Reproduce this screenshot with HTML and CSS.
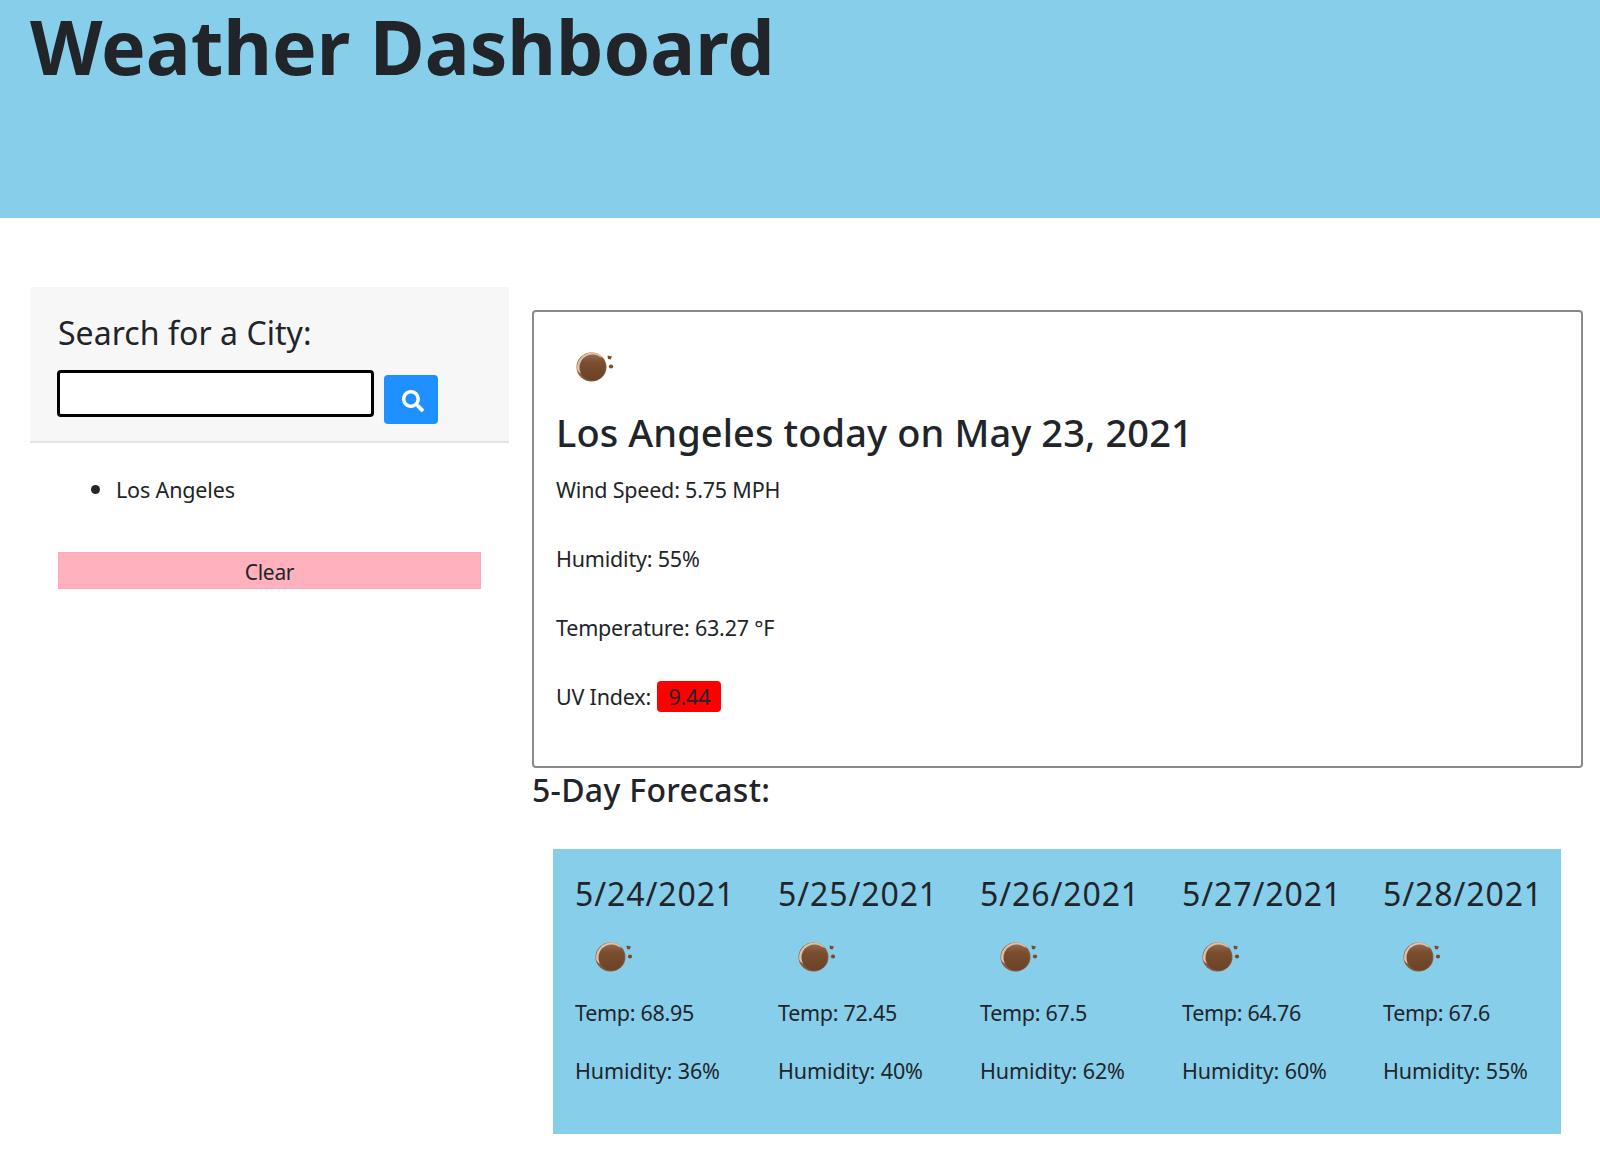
FILE: index.html
```html
<!DOCTYPE html>
<html lang="en">
<head>
<meta charset="utf-8">
<title>Weather Dashboard</title>
<link rel="stylesheet" href="styles.css">
</head>
<body>
<svg class="defs" width="0" height="0" aria-hidden="true">
  <defs>
    <linearGradient id="ball" x1="0" y1="0" x2="0" y2="1">
      <stop offset="0" stop-color="#94674a"/>
      <stop offset="0.3" stop-color="#7a4f30"/>
      <stop offset="1" stop-color="#6b4226"/>
    </linearGradient>
    <symbol id="wx" viewBox="0 0 50 50">
      <ellipse cx="25.500" cy="26" rx="15" ry="14.500" fill="#8a5a3a"/>
      <path d="M11 27C11 18 18 11.500 26 11.500C31 11.500 35 14 37 17C31 14.500 21 14.500 17 19C14.500 22 14 27 16 33C13 32 11 30 11 27Z" fill="#e3bfa8"/>
      <circle cx="26.500" cy="26.500" r="13" fill="url(#ball)"/>
      <path d="M41.500 14.500L46 15.500L44.500 18.500L42 18Z" fill="#7a4a2c"/>
      <circle cx="45" cy="25.500" r="2.100" fill="#7a4a2c"/>
    </symbol>
  </defs>
</svg>
<header class="banner">
  <h1 class="title">Weather Dashboard</h1>
</header>
<div class="layout">
  <aside class="sidebar">
    <div class="search">
      <h2 class="search-title">Search for a City:</h2>
      <form class="search-form">
        <input class="search-input" type="text" aria-label="City">
        <button class="search-btn" type="button" aria-label="Search">
          <svg viewBox="0 0 512 512" width="22" height="22"><path fill="#fff" d="M505 442.700L405.300 343c-4.500-4.500-10.600-7-17-7H372c27.600-35.300 44-79.700 44-128C416 93.100 322.900 0 208 0S0 93.100 0 208s93.100 208 208 208c48.300 0 92.700-16.400 128-44v16.300c0 6.400 2.500 12.500 7 17l99.700 99.700c9.400 9.400 24.600 9.400 33.900 0l28.300-28.300c9.400-9.400 9.400-24.600.1-34zM208 336c-70.700 0-128-57.200-128-128 0-70.700 57.200-128 128-128 70.700 0 128 57.200 128 128 0 70.700-57.200 128-128 128z"/></svg>
        </button>
      </form>
    </div>
    <ul class="history">
      <li>Los Angeles</li>
    </ul>
    <button class="clear" type="button">Clear</button>
  </aside>
  <main class="content">
    <section class="today">
      <svg class="wx-today"><use href="#wx"/></svg>
      <h2 class="today-title">Los Angeles today on May 23, 2021</h2>
      <p class="stat">Wind Speed: 5.75 MPH</p>
      <p class="stat">Humidity: 55%</p>
      <p class="stat">Temperature: 63.27 °F</p>
      <p class="stat">UV Index: <span class="uv">9.44</span></p>
    </section>
    <h3 class="forecast-title">5-Day Forecast:</h3>
    <section class="forecast">
      <div class="day"><h4 class="date">5/24/2021</h4><svg class="wx-day"><use href="#wx"/></svg><p class="fc">Temp: 68.95</p><p class="fc">Humidity: 36%</p></div>
      <div class="day"><h4 class="date">5/25/2021</h4><svg class="wx-day"><use href="#wx"/></svg><p class="fc">Temp: 72.45</p><p class="fc">Humidity: 40%</p></div>
      <div class="day"><h4 class="date">5/26/2021</h4><svg class="wx-day"><use href="#wx"/></svg><p class="fc">Temp: 67.5</p><p class="fc">Humidity: 62%</p></div>
      <div class="day"><h4 class="date">5/27/2021</h4><svg class="wx-day"><use href="#wx"/></svg><p class="fc">Temp: 64.76</p><p class="fc">Humidity: 60%</p></div>
      <div class="day"><h4 class="date">5/28/2021</h4><svg class="wx-day"><use href="#wx"/></svg><p class="fc">Temp: 67.6</p><p class="fc">Humidity: 55%</p></div>
    </section>
  </main>
</div>
</body>
</html>
```
FILE: styles.css
```css
* { box-sizing: border-box; }
html, body { margin: 0; padding: 0; }
body {
  font-family: "Noto Sans", "Open Sans", "Liberation Sans", sans-serif;
  color: #212529;
  background: #fff;
  overflow: hidden;
}
.defs { display: block; height: 0; }
h1, h2, h3, h4, p, ul { margin: 0; padding: 0; }

.banner { height: 218px; background: #87ceeb; padding-left: 30px; }
.title { font-size: 75px; font-weight: 700; line-height: 92px; letter-spacing: 0; }

.layout { display: flex; align-items: flex-start; padding-left: 30px; }

.sidebar { width: 479px; margin-top: 69px; flex: none; }
.search { height: 156px; background: #f7f7f7; border-bottom: 2px solid #e3e3e3; padding: 25px 28px 0; }
.search-title { font-size: 32px; font-weight: 400; line-height: 42px; letter-spacing: 0.05px; }
.search-form { display: flex; align-items: flex-start; gap: 10px; margin-top: 16px; margin-left: -1px; }
.search-input { width: 317px; height: 47px; border: 3px solid #000; border-radius: 4px; background: #fff; }
.search-btn { width: 54px; height: 49px; margin-top: 5px; padding: 2px 0 0 3px; border: 0; border-radius: 4px; background: #1e90ff; display: flex; align-items: center; justify-content: center; }

.history { list-style: disc; padding: 31px 0 0 86px; height: 109px; font-size: 21.500px; line-height: 28px; letter-spacing: -0.15px; }
.history li::marker { font-size: 26px; }
.clear { display: block; width: 423px; height: 37px; margin-left: 28px; padding: 2px 0 0; border: 1px solid #ffa9b6; background: #ffb1bd; color: #212529; font: inherit; font-size: 21px; letter-spacing: -0.3px; }

.content { width: 1051px; margin-left: 23px; flex: none; }
.today { height: 458px; margin-top: 92px; padding: 29px 22px 0; border: 2px solid #8a8a8a; border-radius: 4px; }
.wx-today { display: block; width: 50px; height: 50px; margin-left: 10px; }
.today-title { margin-top: 16px; font-size: 38px; font-weight: 500; line-height: 50px; letter-spacing: 0.1px; }
.stat { font-size: 21.500px; line-height: 30px; margin-top: 39px; letter-spacing: -0.2px; }
.today-title + .stat { margin-top: 18px; }
.stat:last-child { margin-top: 38px; }
.uv { display: inline-block; background: #f00; border-radius: 4px; padding: 0 11px; margin-left: 1px; line-height: 31px; }

.forecast-title { font-size: 32px; font-weight: 500; line-height: 44px; letter-spacing: 0.3px; }
.forecast { display: flex; width: 1008px; height: 285px; margin: 37px 0 0 21px; padding: 22px 0 0 22px; background: #87ceeb; }
.day { width: 202px; flex: none; }
.day:first-child { width: 203px; }
.day:nth-child(4) { width: 201px; }
.date { font-size: 32px; font-weight: 400; line-height: 46px; letter-spacing: 0.9px; }
.wx-day { display: block; width: 50px; height: 50px; margin: 14px 0 0 10px; }
.fc { font-size: 21.500px; line-height: 30px; letter-spacing: -0.3px; margin-top: 28px; }
.fc + .fc { letter-spacing: -0.1px; }
.wx-day + .fc { margin-top: 17px; }
```
